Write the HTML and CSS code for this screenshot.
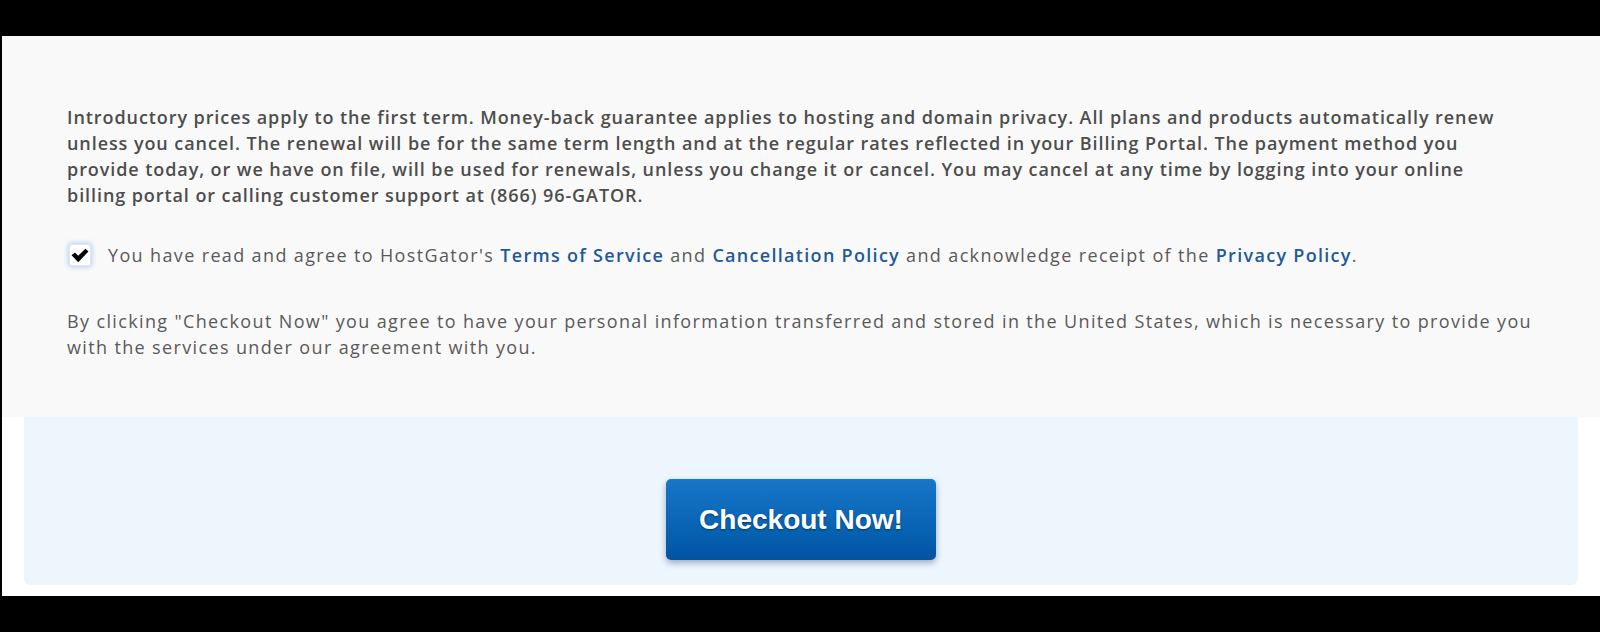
FILE: index.html
```html
<!DOCTYPE html>
<html lang="en">
<head>
<meta charset="utf-8">
<title>Checkout</title>
<link rel="stylesheet" href="styles.css">
</head>
<body>
<div class="frame">
  <section class="terms">
    <p class="renewal">Introductory prices apply to the first term. Money-back guarantee applies to hosting and domain privacy. All plans and products automatically renew unless you cancel. The renewal will be for the same term length and at the regular rates reflected in your Billing Portal. The payment method you provide today, or we have on file, will be used for renewals, unless you change it or cancel. You may cancel at any time by logging into your online billing portal or calling customer support at (866) 96-GATOR.</p>
    <label class="agree">
      <span class="check">
        <svg viewBox="0 0 20 16" width="18" height="15"><path d="M0.6 7.8 L4.4 4.6 L8 8.4 L16 0.4 L19.4 3.6 L8 15.4 Z" fill="#000"/></svg>
      </span>
      <span class="agree-text">You have read and agree to HostGator's <a href="#">Terms of Service</a> and <a href="#">Cancellation Policy</a> and acknowledge receipt of the <a href="#">Privacy Policy</a>.</span>
    </label>
    <p class="transfer">By clicking "Checkout Now" you agree to have your personal information transferred and stored in the United States, which is necessary to provide you with the services under our agreement with you.</p>
  </section>
  <section class="checkout">
    <button class="checkout-btn" type="button">Checkout Now!</button>
  </section>
</div>
</body>
</html>
```

FILE: styles.css
```css
html, body {
  margin: 0;
  padding: 0;
  background: #000;
  height: 632px;
  overflow: hidden;
}

.frame {
  margin: 36px 0 0 2px;
  height: 560px;
  background: #fff;
  display: flex;
  flex-direction: column;
}

.terms {
  background: #f9f9f9;
  height: 381px;
  box-sizing: border-box;
  padding: 68px 60px 0 65px;
  font-family: "Open Sans", "Liberation Sans", sans-serif;
}

.renewal {
  margin: 0;
  max-width: 1440px;
  font-size: 18px;
  line-height: 26px;
  font-weight: 600;
  letter-spacing: 0.92px;
  color: #4d4d4d;
}

.agree {
  display: flex;
  align-items: center;
  gap: 17px;
  margin: 34px 0 0 2px;
  font-size: 18px;
  line-height: 26px;
  letter-spacing: 1.36px;
  color: #5a5a5a;
}

.check {
  flex: none;
  width: 22px;
  height: 22px;
  box-sizing: border-box;
  background: #fff;
  border: 1px solid #dde6f0;
  border-radius: 3px;
  box-shadow: 0 0 5px 1px rgba(120, 175, 235, 0.55);
  display: flex;
  align-items: center;
  justify-content: center;
}

.agree-text a {
  color: #1f5a99;
  font-weight: 600;
  letter-spacing: 1.3px;
  text-decoration: none;
}

.transfer {
  margin: 40px 0 0;
  font-size: 18px;
  line-height: 26px;
  letter-spacing: 1.36px;
  color: #5a5a5a;
}

.checkout {
  margin: 0 22px;
  height: 168px;
  box-sizing: border-box;
  background: #edf5fd;
  border-radius: 0 0 6px 6px;
  display: flex;
  justify-content: center;
  padding-top: 62px;
}

.checkout-btn {
  width: 270px;
  height: 81px;
  border: 0;
  border-radius: 5px;
  background: linear-gradient(#1976c8, #0560b0 70%, #0453a0);
  box-shadow: 0 3px 6px rgba(0, 40, 90, 0.35);
  color: #fff;
  font-family: "Liberation Sans", Arial, sans-serif;
  font-weight: 700;
  font-size: 28px;
  text-shadow: 0 1px 2px rgba(0, 0, 0, 0.45);
  cursor: pointer;
}
```
